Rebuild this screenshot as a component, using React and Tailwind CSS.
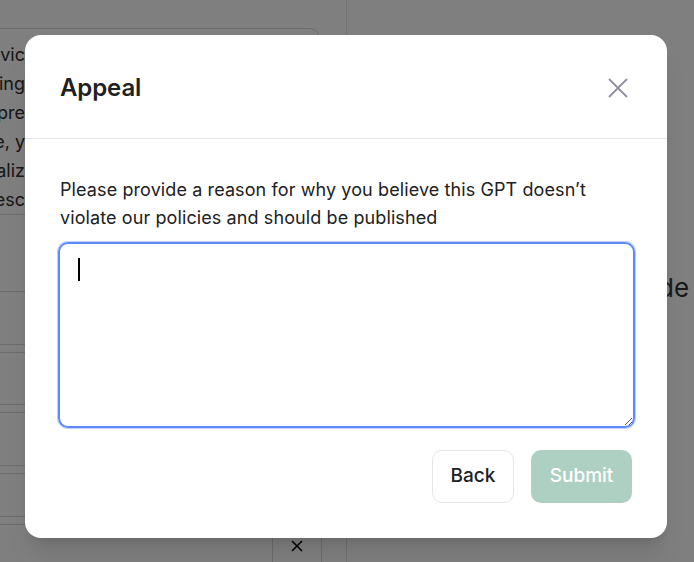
import { X } from 'lucide-react';

const bgLines = ['ovic', 'ing', 'pre', 'e, y', 'aliz', 'esc'];
const rows = [77, 53, 8, 52, 8, 53, 8, 43, 8];

export default function App() {
  return (
    <div className="relative h-[562px] w-[694px] overflow-hidden bg-white font-['Inter',sans-serif]">
      {/* page behind the dialog */}
      <div className="flex h-full">
        <div className="flex w-[347px] flex-col border-r border-[#e3e3e3] pt-[28px]">
          <div className="mr-[26px] rounded-tr-[10px] border-r border-t border-b border-[#d8d8d8] pt-[11px] text-[18px] leading-[29px] text-[#2e2e2e]">
            {bgLines.map((l) => (
              <div key={l} className="flex w-[25px] justify-end overflow-hidden whitespace-nowrap">{l}</div>
            ))}
          </div>
          {rows.map((h, i) => (
            <div key={i} className="border-b border-[#d8d8d8]" style={{ height: h }} />
          ))}
          <div className="flex flex-1">
            <div className="w-[272px]" />
            <div className="flex w-[50px] items-start justify-center border-l border-r border-[#d8d8d8] pt-[12px]">
              <X className="h-[18px] w-[18px] text-black" strokeWidth={2.2} />
            </div>
          </div>
        </div>
        <div className="flex-1 pl-[311px] pt-[268px] text-[26px] text-[#333]">de</div>
      </div>

      {/* overlay */}
      <div className="absolute inset-0 bg-black/50" />

      {/* dialog */}
      <div className="absolute left-[25px] top-[35px] flex h-[503px] w-[642px] flex-col rounded-[16px] bg-white shadow-xl">
        <div className="flex h-[104px] items-center justify-between border-b border-[#e5e5e5] pl-[35px] pr-[32px] pt-[3px]">
          <h2 className="text-[24px] font-semibold tracking-[-0.1px] text-[#202123]">Appeal</h2>
          <X className="h-[34px] w-[34px] text-[#8e8ea0]" strokeWidth={1.3} />
        </div>
        <div className="relative flex flex-1 flex-col px-[33px] pt-[37px]">
          <p className="w-[560px] pl-[2px] text-[18px] leading-[28px] tracking-[0.1px] text-[#202123]">
            Please provide a reason for why you believe this GPT doesn’t violate our policies and should be published
          </p>
          <textarea
            className="mt-[10px] h-[186px] w-[577px] resize-y rounded-[10px] border-2 border-[#5e8af7] px-[18px] py-[14px] text-[18px] outline-none ring-1 ring-[#5e8af7]/40"
          />
          <span className="absolute left-[53px] top-[119px] h-[23px] w-[1.5px] bg-black" />
          <div className="mt-[22px] flex justify-end gap-[17px] pr-[2px]">
            <button className="h-[53px] w-[82px] rounded-[10px] border border-[#e5e5e5] bg-white text-[19px] font-medium text-[#202123]">
              Back
            </button>
            <button className="h-[53px] w-[101px] rounded-[10px] bg-[#aed0c2] text-[19px] font-medium text-white">
              Submit
            </button>
          </div>
        </div>
      </div>
    </div>
  );
}
